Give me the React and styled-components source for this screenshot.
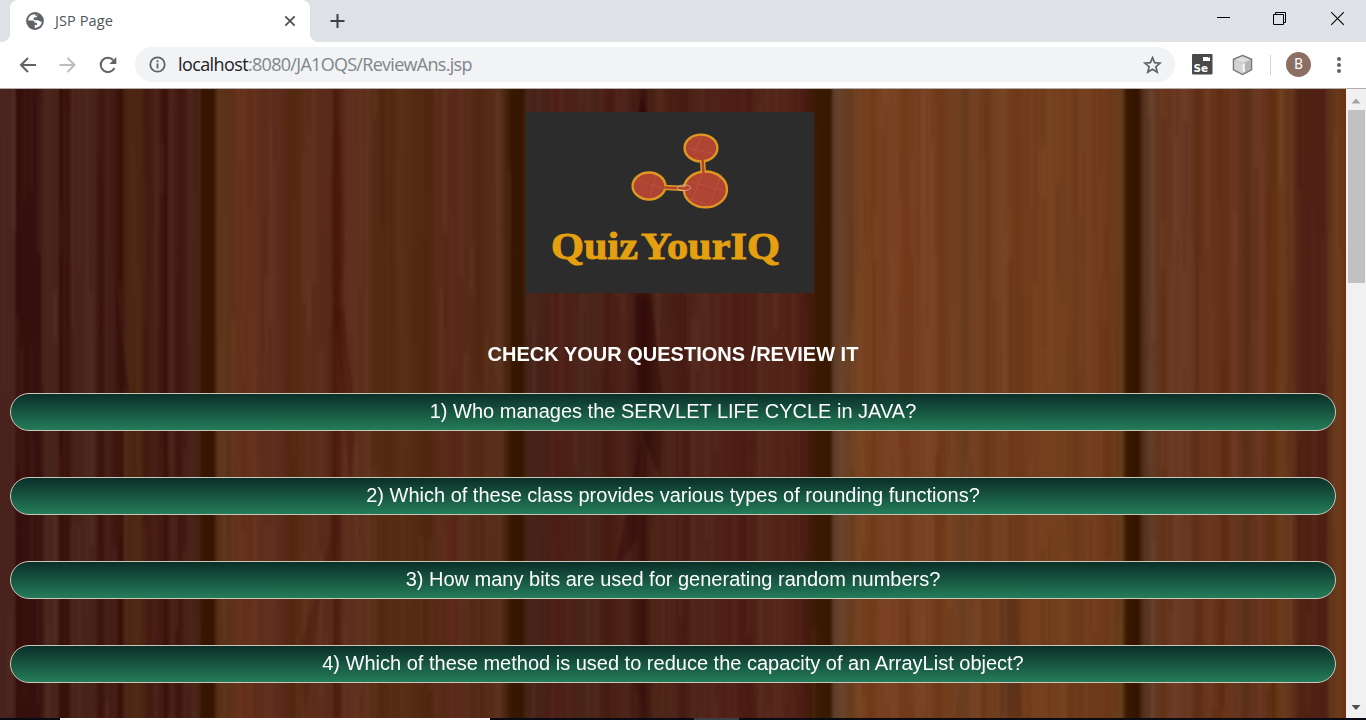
import React from "react";
import styled, { createGlobalStyle } from "styled-components";

const GlobalStyle = createGlobalStyle`
  * { box-sizing: border-box; }
  body { margin: 0; overflow: hidden; font-family: "Liberation Sans", Arial, sans-serif; }
`;

const Window = styled.div`
  width: 1366px;
  height: 720px;
  display: flex;
  flex-direction: column;
  overflow: hidden;
  background: #fff;
`;

const TabStrip = styled.header`
  height: 42px;
  flex: none;
  display: flex;
  background: #dee1e6;
  padding-left: 10px;
`;

const Tab = styled.div`
  width: 300px;
  height: 42px;
  display: flex;
  align-items: center;
  padding: 0 13px 0 16px;
  background: #fff;
  border-radius: 8px 8px 0 0;
  position: relative;
  &::before, &::after {
    content: "";
    position: absolute;
    bottom: 0;
    width: 8px;
    height: 8px;
  }
  &::before { left: -8px; background: radial-gradient(circle at 0 0, transparent 7.5px, #fff 8px); }
  &::after { right: -8px; background: radial-gradient(circle at 100% 0, transparent 7.5px, #fff 8px); }
`;

const TabTitle = styled.span`
  flex: 1;
  margin-left: 11px;
  padding-bottom: 1px;
  font: 14.5px "Open Sans", sans-serif;
  letter-spacing: 0.1px;
  color: #50545a;
  white-space: nowrap;
`;

const NewTab = styled.div`
  display: flex;
  align-items: center;
  margin-left: 19px;
`;

const WindowButtons = styled.div`
  display: flex;
  margin-left: auto;
  align-items: center;
  gap: 43px;
  padding: 0 22px 5px 0;
`;

const Toolbar = styled.div`
  height: 47px;
  flex: none;
  display: flex;
  align-items: center;
  padding: 0 17px 1px 18px;
  border-bottom: 1px solid #b3aeac;
`;

const NavButtons = styled.div`
  display: flex;
  gap: 20px;
  width: 117px;
`;

const AddressBar = styled.div`
  width: 1040px;
  height: 35px;
  display: flex;
  align-items: center;
  padding: 0 13px 0 12px;
  border-radius: 18px;
  background: #f1f3f4;
`;

const Url = styled.span`
  flex: 1;
  margin-left: 11px;
  padding-bottom: 1px;
  font: 18px "Open Sans", sans-serif;
  letter-spacing: ${(p) => p.$tracking};
  color: #80868b;
  white-space: nowrap;
  b { font-weight: 400; letter-spacing: -0.6px; color: #202124; }
`;

const Extensions = styled.div`
  display: flex;
  align-items: center;
  margin-left: 17px;
  gap: 19px;
`;

const Divider = styled.i`
  width: 1px;
  height: 20px;
  background: #cfd1d4;
  margin-left: -2px;
`;

const Avatar = styled.span`
  width: 25px;
  height: 25px;
  border-radius: 50%;
  background: #8d6e63;
  color: #fff;
  font: 14px/25px Roboto, sans-serif;
  text-align: center;
  margin: 0 7px 0 -4px;
`;

const Body = styled.div`
  height: 629px;
  flex: none;
  display: flex;
`;

const Page = styled.main`
  width: 1346px;
  height: 629px;
  display: flex;
  flex-direction: column;
  align-items: center;
  position: relative;
  overflow: hidden;
  padding: 23px 10px 0;
  background: linear-gradient(90deg,
    #4a2420 0, #4a2420 14px, #360f0e 17px, #37100e 40px, #4a271d 46px, #48251b 57px,
    #361008 61px, #3a120a 68px, #48231b 73px, #4a251c 94px, #3a1209 101px, #48221a 107px,
    #38110a 121px, #4c2617 126px, #4e260f 140px, #431a10 146px, #4a2018 155px, #3b100b 166px,
    #4d251a 172px, #3f150d 178px, #4b241c 192px, #42200f 199px, #361600 203px, #351500 213px,
    #5a3319 218px, #5e341b 230px, #67311a 240px, #60301b 260px, #5f2d1f 278px, #542810 292px,
    #5d301a 306px, #5c2c1c 328px, #4a1b0d 335px, #602f1f 346px, #5c301a 368px, #512710 386px,
    #5c3018 402px, #502710 426px, #5a2e19 442px, #5c271a 455px, #58301b 467px, #532712 480px,
    #5b321d 500px, #371701 512px, #351600 522px, #47261a 527px, #48231a 540px, #4d1e15 556px,
    #4c251a 580px, #4c251a 598px, #471b12 608px, #50251b 625px, #38120c 643px, #50271a 657px,
    #471b14 685px, #51261b 695px, #502119 725px, #4a1c13 750px, #54271c 760px, #552619 783px,
    #4b1d13 804px, #3a1a01 818px, #371900 830px, #5d3d27 834px, #6a432d 841px, #68401f 850px,
    #784424 860px, #733b18 872px, #7a4324 882px, #7a4221 898px, #703818 907px, #784222 916px,
    #7a4423 930px, #6d3818 940px, #774320 950px, #683c20 965px, #764322 977px, #6c3a1a 987px,
    #774422 1003px, #6e3918 1018px, #75401e 1032px, #75401e 1065px, #6d3a1a 1075px, #75401e 1086px,
    #6e3919 1110px, #68401e 1121px, #3a1800 1127px, #341300 1138px, #553420 1144px, #66402a 1152px,
    #653319 1164px, #6d3b26 1174px, #6b3823 1190px, #5f2d14 1197px, #6c3921 1208px, #632d12 1222px,
    #6b3821 1234px, #5c3019 1245px, #6b3823 1260px, #602d10 1274px, #6c3d1c 1280px, #66371d 1291px,
    #502214 1299px, #502014 1325px, #61331b 1330px, #6b3d1c 1338px, #6e3015 1346px);
`;

const Grain = styled.svg`
  position: absolute;
  inset: 0;
`;

const Logo = styled.svg`
  display: block;
  flex: none;
  margin-right: 6px;
  position: relative;
`;

const Heading = styled.h1`
  margin: 48px 0 27px;
  height: 25px;
  font-size: 20px;
  line-height: 26px;
  font-weight: 700;
  color: #fff;
  white-space: nowrap;
  position: relative;
`;

const QuestionList = styled.div`
  width: 100%;
  display: flex;
  flex-direction: column;
  gap: 46px;
  position: relative;
`;

const Question = styled.div`
  height: 38px;
  border: 1px solid #c9c8b8;
  border-radius: 19px;
  background: linear-gradient(#0a2f28, #247c5a);
  color: #fff;
  font-size: 20px;
  line-height: 34px;
  text-align: center;
  white-space: nowrap;
`;

const Scrollbar = styled.aside`
  width: 20px;
  height: 629px;
  display: flex;
  flex-direction: column;
  align-items: center;
  background: #f1f1f1;
`;

const Thumb = styled.div`
  width: 17px;
  height: 173px;
  margin: 0 0 auto 1px;
  background: #c1c1c1;
`;

const Taskbar = styled.footer`
  height: 2px;
  flex: none;
  display: flex;
  padding-left: 60px;
  background: #080b14;
`;

const TaskItem = styled.i`
  width: ${(p) => p.$width};
  margin-right: 204px;
  background: ${(p) => p.$color};
`;

const questions = [
  "1) Who manages the SERVLET LIFE CYCLE in JAVA?",
  "2) Which of these class provides various types of rounding functions?",
  "3) How many bits are used for generating random numbers?",
  "4) Which of these method is used to reduce the capacity of an ArrayList object?",
];

// Seams between the planks stay free of grain lines.
const seams = [[199, 217], [508, 525], [814, 836], [1122, 1143]];

function grainLines() {
  let seed = 77;
  const random = () => {
    seed = (seed * 16807) % 2147483647;
    return seed / 2147483647;
  };
  const lines = [];
  for (let x = 2; x < 1346; x += 4 + Math.floor(random() * 5)) {
    if (seams.some(([a, b]) => x > a && x < b)) continue;
    for (let y = -Math.floor(random() * 50); y < 629; ) {
      const h = 50 * (1 + Math.floor(random() * 5));
      lines.push({ x, y, h, w: 2 + random() * 3, dark: random() > 0.45, o: 0.03 + random() * 0.09 });
      y += h;
    }
  }
  return lines;
}

const lines = grainLines();

function WoodGrain() {
  return (
    <Grain width="1346" height="629" viewBox="0 0 1346 629">
      <filter id="soft" x="-10%" y="-5%" width="120%" height="110%" colorInterpolationFilters="sRGB">
        <feGaussianBlur stdDeviation="1 3" />
      </filter>
      <g filter="url(#soft)">
        {lines.map((l, i) => (
          <rect key={i} x={l.x} y={l.y} width={l.w} height={l.h} fill={l.dark ? "#381004" : "#8a5c42"} opacity={l.o} />
        ))}
        <path d="M335 8 341 60 343 160 340 240 332 240 331 100Z" fill="#471205" opacity=".4" />
        <path d="M334 220 344 220 356 330 350 400 343 320Z" fill="#471205" opacity=".4" />
        <path d="M642 8 647 28 636 35Z" fill="#270402" opacity=".6" />
        <path d="M636 205 651 205 663 310 660 390 644 350 636 270Z" fill="#2b0504" opacity=".45" />
        <path d="M330 450 342 430 320 510 305 629 300 560Z" fill="#471205" opacity=".3" />
        <path d="M641 350 636 450 613 490 625 430Z" fill="#2b0504" opacity=".4" />
        <path d="M116 190 122 250 130 310 118 300Z" fill="#2b0504" opacity=".4" />
        <path d="M1000 500 1016 500 1022 629 1000 629Z" fill="#482818" opacity=".4" />
      </g>
    </Grain>
  );
}

function LogoImage() {
  return (
    <Logo width="288" height="181" viewBox="0 0 288 181">
      <rect width="288" height="181" fill="#2c2c2c" />
      <g fill="#b04433" stroke="#df981f" strokeWidth="2.4">
        <ellipse cx="175" cy="36" rx="16.4" ry="13.4" />
        <ellipse cx="123" cy="74" rx="16.4" ry="13.5" />
        <ellipse cx="179.4" cy="77.4" rx="21.6" ry="17.9" />
      </g>
      <path d="M176.5 48 177.4 61M139 75.4 158 76.5" stroke="#df981f" strokeWidth="5.4" fill="none" />
      <path d="M176.5 47 177.6 63M137 75.4 160 76.5" stroke="#b04433" strokeWidth="2.4" fill="none" />
      <path d="M176 24 168 41M162 36 189 42M130 63 124 85M110 67 137 77M177 60 165 91M196 61 184 92M165 70 199 79M159 85 183 93" stroke="#d98a79" strokeWidth=".5" opacity=".35" fill="none" />
      <path d="M151 76C152 72 164 72 164.5 75.5 165 79 153 80 151 76" fill="none" stroke="#e7b5a8" strokeWidth="1" opacity=".75" />
      <text x="25" y="146.500" dx="0 0 0 0 2.500" fontFamily="Liberation Serif" fontWeight="700" fontSize="37" fill="#e5a010" stroke="#e5a010" strokeWidth=".9" textLength="229" lengthAdjust="spacingAndGlyphs">QuizYourIQ</text>
    </Logo>
  );
}

export default function App() {
  return (
    <>
      <GlobalStyle />
      <Window>
        <TabStrip>
          <Tab>
            <svg width="18" height="18" viewBox="0 0 18 18">
              <circle cx="9" cy="9" r="8.9" fill="#5f6368" />
              <path d="M8.500 2.200C5 2.300 2.400 5 2.100 8.400h4.200c1.500 0 2.300.8 2.300 2.300h2.300v2.200H8.700v2.800c3.800.2 6.900-2.600 7.100-6.300-.8.300-1.500.2-2.200-.4-.6-.5-1.200-.8-2-.8H8.500V6.100h1.200c1 0 1.500-.6 1.500-1.400V3.300c.6-.2 1-.1 1.300-.2A7 7 0 0 0 8.500 2.200Z" fill="#fff" />
              <path d="M8.600 2.200h2.600v1.500c0 1-.7 1.700-1.700 1.700H7.700v2.400h4c.7 0 1.200.4 1.700.9.600.6 1.400.8 2.400.7" fill="#5f6368" />
            </svg>
            <TabTitle>JSP Page</TabTitle>
            <svg width="14" height="14" viewBox="0 0 14 14" stroke="#4d5155" strokeWidth="1.8"><path d="M2.300 2.300 11.700 11.700M11.700 2.300 2.300 11.700" /></svg>
          </Tab>
          <NewTab>
            <svg width="16" height="16" viewBox="0 0 16 16" stroke="#3c4043" strokeWidth="2"><path d="M8.500 1v14M1.500 8h14" /></svg>
          </NewTab>
          <WindowButtons>
            <svg width="14" height="14" viewBox="0 0 14 14" stroke="#000" shapeRendering="crispEdges"><path d="M1 5.500h13" /></svg>
            <svg width="14" height="14" viewBox="0 0 14 14" fill="none" stroke="#000"><path d="M.5 2.500h10v10H.5zM2.500 2.500V.500h10v10H11" /></svg>
            <svg width="14" height="14" viewBox="0 0 14 14" stroke="#000" strokeWidth="1.1"><path d="M1.200.2 13.800 12.800M13.800.2 1.200 12.800" /></svg>
          </WindowButtons>
        </TabStrip>
        <Toolbar>
          <NavButtons>
            <svg width="20" height="20" viewBox="0 0 20 20" fill="none" stroke="#5f6368" strokeWidth="2"><path d="M18 10H3.500M10 3 3 10l7 7" /></svg>
            <svg width="20" height="20" viewBox="0 0 20 20" fill="none" stroke="#babcbe" strokeWidth="2"><path d="M1.500 10H16M9.500 3l7 7-7 7" /></svg>
            <svg width="20" height="20" viewBox="0 0 20 20" fill="none" stroke="#5f6368" strokeWidth="2"><path d="M16.400 13A7.200 7.200 0 1 1 15.200 5" /><path d="M18.300 2v7h-7Z" fill="#5f6368" stroke="none" /></svg>
          </NavButtons>
          <AddressBar>
            <svg width="20" height="20" viewBox="0 0 20 20" fill="none" stroke="#5f6368" strokeWidth="1.8"><circle cx="10.5" cy="9.5" r="7.2" /><path d="M10.500 8.500v5M10.500 5.300v2" /></svg>
            <Url $tracking="-0.71px"><b>localhost</b>:8080/JA1OQS/ReviewAns.jsp</Url>
            <svg width="20" height="20" viewBox="0 0 20 20" fill="none" stroke="#5f6368" strokeWidth="1.7"><path d="m10.500 2.600 2.100 5 5.500.5-4.200 3.600 1.300 5.400-4.700-2.900-4.700 2.900 1.300-5.400L2.900 8.100l5.500-.5Z" /></svg>
          </AddressBar>
          <Extensions>
            <svg width="21" height="21" viewBox="0 0 21 21">
              <rect width="20.5" height="20.5" rx="1" fill="#4a4a4a" />
              <path d="M11 3h5v1l2-1v4H11Z" fill="#fff" />
              <text x="1.5" y="18" fontFamily="DejaVu Sans" fontWeight="700" fontSize="11" fill="#fff" textLength="14.5" lengthAdjust="spacingAndGlyphs">Se</text>
            </svg>
            <svg width="21" height="22" viewBox="0 0 22 22">
              <path d="M11 1 20.500 5v11L11 21 1.500 16V5Z" fill="#bcbcbc" stroke="#777" strokeWidth="1.4" />
              <path d="M11 2 19 5.500 11 9 3 5.500Z" fill="#dedede" />
              <path d="M11 9.500 19.500 6v9.500L11 20Z" fill="#b5b5b5" />
              <path d="M2.500 6 11 9.500V20L2.500 15.500Z" fill="#d4d4d4" />
              <path d="M11 10V19l2.500-1V9Z" fill="#f4f4f4" />
            </svg>
            <Divider />
            <Avatar>B</Avatar>
            <svg width="4" height="18" viewBox="0 0 4 18" fill="#5f6368"><circle cx="2" cy="3" r="2" /><circle cx="2" cy="9" r="2" /><circle cx="2" cy="15" r="2" /></svg>
          </Extensions>
        </Toolbar>
        <Body>
          <Page>
            <WoodGrain />
            <LogoImage />
            <Heading>CHECK YOUR QUESTIONS /REVIEW IT</Heading>
            <QuestionList>
              {questions.map((q) => <Question key={q}>{q}</Question>)}
            </QuestionList>
          </Page>
          <Scrollbar>
            <svg width="20" height="21" viewBox="0 0 20 21"><path d="M5.500 14.500h9L10 9.500Z" fill="#a3a3a3" /></svg>
            <Thumb />
            <svg width="20" height="21" viewBox="0 0 20 21"><path d="M5.500 8h9L10 13Z" fill="#505050" /></svg>
          </Scrollbar>
        </Body>
        <Taskbar>
          <TaskItem $width="430px" $color="#fff" />
          <TaskItem $width="45px" $color="#3c3f46" />
        </Taskbar>
      </Window>
    </>
  );
}
